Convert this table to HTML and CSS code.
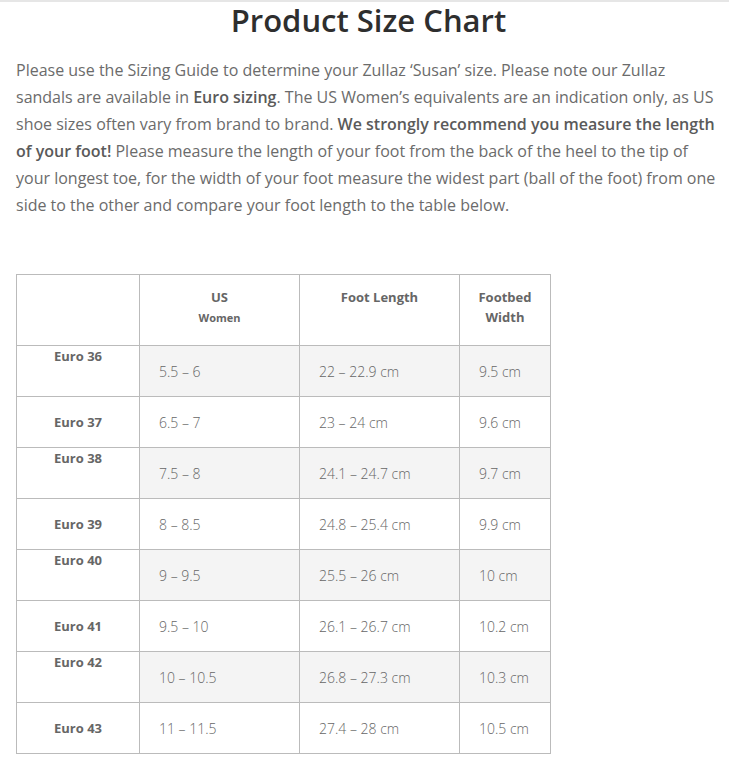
FILE: index.html
```html
<!DOCTYPE html>
<html lang="en">
<head>
<meta charset="utf-8">
<title>Product Size Chart</title>
<link rel="stylesheet" href="styles.css">
</head>
<body>
<div class="page">
  <h1 class="title">Product Size Chart</h1>
  <p class="intro">Please use the Sizing Guide to determine your Zullaz ‘Susan’ size. Please note our Zullaz sandals are available in <strong>Euro sizing</strong>. The US Women’s equivalents are an indication only, as US shoe sizes often vary from brand to brand. <strong>We strongly recommend you measure the length of your foot!</strong> Please measure the length of your foot from the back of the heel to the tip of your longest toe, for the width of your foot measure the widest part (ball of the foot) from one side to the other and compare your foot length to the table below.</p>
  <table class="chart">
    <colgroup>
      <col class="c1"><col class="c2"><col class="c3"><col class="c4">
    </colgroup>
    <thead>
      <tr class="head">
        <th></th>
        <th>US<br><span class="sub">Women</span></th>
        <th>Foot Length</th>
        <th>Footbed<br>Width</th>
      </tr>
    </thead>
    <tbody>
      <tr class="shade"><th class="top">Euro 36</th><td>5.5 – 6</td><td>22 – 22.9 cm</td><td>9.5 cm</td></tr>
      <tr><th>Euro 37</th><td>6.5 – 7</td><td>23 – 24 cm</td><td>9.6 cm</td></tr>
      <tr class="shade"><th class="top">Euro 38</th><td>7.5 – 8</td><td>24.1 – 24.7 cm</td><td>9.7 cm</td></tr>
      <tr><th>Euro 39</th><td>8 – 8.5</td><td>24.8 – 25.4 cm</td><td>9.9 cm</td></tr>
      <tr class="shade"><th class="top">Euro 40</th><td>9 – 9.5</td><td>25.5 – 26 cm</td><td>10 cm</td></tr>
      <tr><th>Euro 41</th><td>9.5 – 10</td><td>26.1 – 26.7 cm</td><td>10.2 cm</td></tr>
      <tr class="shade"><th class="top">Euro 42</th><td>10 – 10.5</td><td>26.8 – 27.3 cm</td><td>10.3 cm</td></tr>
      <tr><th>Euro 43</th><td>11 – 11.5</td><td>27.4 – 28 cm</td><td>10.5 cm</td></tr>
    </tbody>
  </table>
</div>
</body>
</html>
```
FILE: styles.css
```css
html, body {
  margin: 0;
  padding: 0;
  background: #fff;
}
body {
  font-family: "Open Sans", "Liberation Sans", sans-serif;
  color: #6b6b6b;
  border-top: 2px solid #e6e6e6;
}
.page {
  padding: 0 8px 0 16px;
}
.title {
  margin: 0;
  text-align: center;
  font-size: 31px;
  line-height: 36px;
  font-weight: 600;
  color: #2e2e2e;
}
.intro {
  margin: 19px 0 0 0;
  font-size: 16px;
  line-height: 27px;
  color: #6b6b6b;
}
.intro strong {
  font-weight: 600;
  color: #5a5a5a;
}
.chart {
  margin-top: 55px;
  border-collapse: collapse;
  width: 535px;
  table-layout: fixed;
}
.c1 { width: 123px; }
.c2 { width: 160px; }
.c3 { width: 160px; }
.c4 { width: 91px; }
.chart th, .chart td {
  border: 1px solid #bbb;
}
.head th {
  height: 71px;
  box-sizing: border-box;
  padding: 12px 8px 0;
  vertical-align: top;
  text-align: center;
  font-size: 13px;
  line-height: 20px;
  font-weight: 700;
  color: #666;
}
.head .sub {
  font-size: 11px;
}
tbody tr {
  height: 51px;
}
tbody th {
  background: #fff;
  text-align: center;
  vertical-align: middle;
  font-size: 13px;
  line-height: 18px;
  font-weight: 700;
  color: #666;
  padding: 0 8px;
}
tbody th.top {
  vertical-align: top;
  padding-top: 1px;
}
tbody td {
  padding: 0 10px 0 19px;
  vertical-align: middle;
  font-size: 14px;
  font-weight: 300;
  color: #666;
}
tr.shade td {
  background: #f4f4f4;
}
```
